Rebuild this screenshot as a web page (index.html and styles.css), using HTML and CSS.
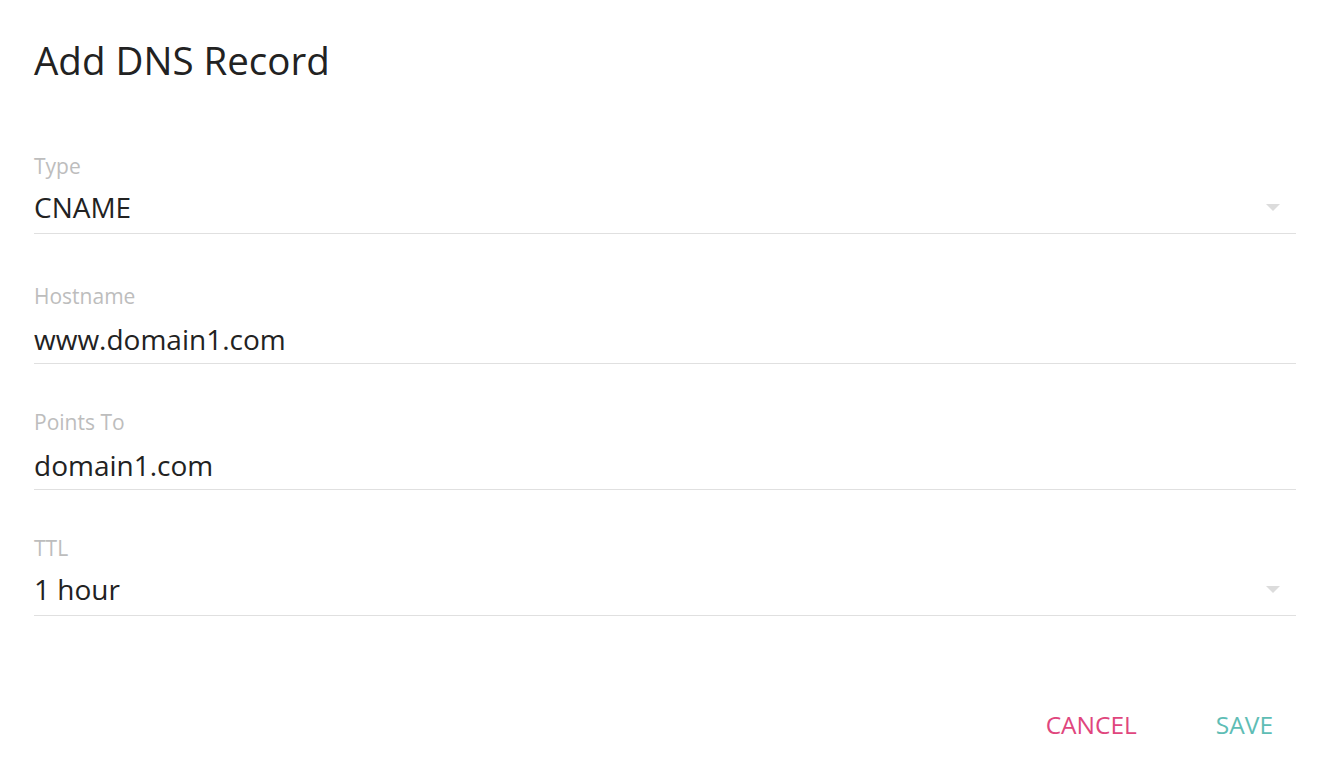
FILE: index.html
```html
<!DOCTYPE html>
<html lang="en">

<head>
	<meta charset="UTF-8">
	<meta name="viewport" content="width=device-width, initial-scale=1.0">
	<title>Add DNS Record</title>
	<link rel="stylesheet" href="styles.css">
</head>

<body>
	<main id="dialog">
		<h1>Add DNS Record</h1>
		<form id="record">
			<div class="field select first">
				<label>Type</label>
				<div class="value">
					<span>CNAME</span>
					<svg class="caret" width="14" height="7" viewBox="0 0 14 7"><path d="M0 0 H14 L7 7 Z" /></svg>
				</div>
			</div>
			<div class="field">
				<label>Hostname</label>
				<div class="value"><span>www.domain1.com</span></div>
			</div>
			<div class="field">
				<label>Points To</label>
				<div class="value"><span>domain1.com</span></div>
			</div>
			<div class="field select">
				<label>TTL</label>
				<div class="value">
					<span>1 hour</span>
					<svg class="caret" width="14" height="7" viewBox="0 0 14 7"><path d="M0 0 H14 L7 7 Z" /></svg>
				</div>
			</div>
		</form>
		<div id="actions">
			<button class="cancel">CANCEL</button>
			<button class="save">SAVE</button>
		</div>
	</main>
</body>

</html>
```

FILE: styles.css
```css
* {
	margin: 0;
	padding: 0;
	box-sizing: border-box;
}

body {
	background-color: white;
	font-family: 'Open Sans', 'Noto Sans', sans-serif;
	color: #222;
}

#dialog {
	padding: 35px 32px 0 34px;
}

h1 {
	font-size: 38.5px;
	font-weight: 400;
	line-height: 50px;
	color: #222;
}

.field {
	margin-top: 44px;
}
.field.first {
	margin-top: 67px;
}
.field.first + .field {
	margin-top: 48px;
}

.field label {
	display: block;
	font-size: 21px;
	line-height: 28px;
	color: #bdbdbd;
}

.value {
	display: flex;
	justify-content: space-between;
	align-items: center;
	margin-top: 10px;
	padding-bottom: 5px;
	border-bottom: 1px solid #e0e0e0;
	font-size: 28px;
	line-height: 38px;
}
.select .value {
	margin-top: 8px;
	padding-bottom: 7px;
}

.caret {
	fill: #dcdcdc;
	margin-right: 16px;
}

#actions {
	display: flex;
	justify-content: flex-end;
	gap: 79px;
	margin-top: 91px;
	padding-right: 23px;
}

#actions button {
	background: none;
	border: none;
	font-family: inherit;
	font-size: 24.5px;
	line-height: 36px;
}
.cancel {
	color: #e0467d;
}
.save {
	color: #5ebdb5;
}
```
